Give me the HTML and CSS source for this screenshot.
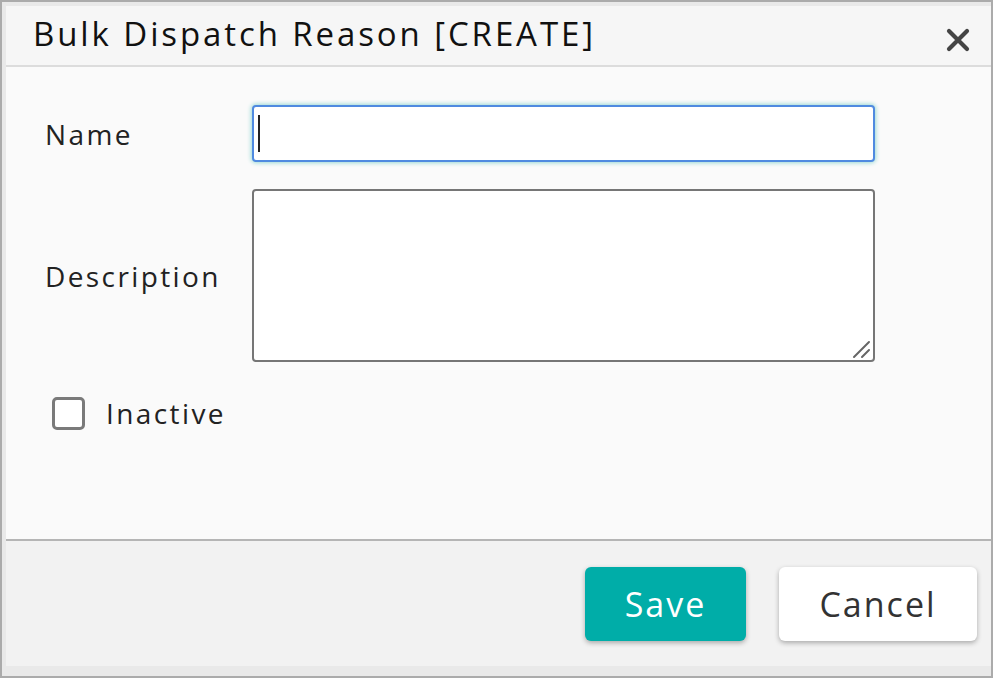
FILE: index.html
```html
<!DOCTYPE html>
<html lang="en">
<head>
    <meta charset="UTF-8">
    <meta name="viewport" content="width=device-width, initial-scale=1.0">
    <title>Bulk Dispatch Reason [CREATE]</title>
    <link rel="stylesheet" href="styles.css">
</head>
<body>
    <div class="frame">
        <div class="dialog">
            <div class="dialog-header">
                <h2>Bulk Dispatch Reason [CREATE]</h2>
                <button class="close-btn" type="button" aria-label="Close">
                    <svg width="24" height="24" viewBox="0 0 24 24">
                        <path d="M3 3 L21 21 M21 3 L3 21" stroke="#444" stroke-width="4.2" stroke-linecap="round"/>
                    </svg>
                </button>
            </div>

            <form class="dialog-body" id="reasonForm">
                <div class="form-row">
                    <label for="name">Name</label>
                    <div class="field">
                        <input type="text" id="name" name="name" class="focused">
                        <span class="caret"></span>
                    </div>
                </div>
                <div class="form-row">
                    <label for="description">Description</label>
                    <div class="field">
                        <textarea id="description" name="description"></textarea>
                        <!-- resize grip -->
                        <svg class="grip" width="22" height="22" viewBox="0 0 22 22">
                            <path d="M4 20 L19 5 M12 20 L19 13" stroke="#666" stroke-width="2" stroke-linecap="round"/>
                        </svg>
                    </div>
                </div>
                <div class="check-row">
                    <input type="checkbox" id="inactive" name="inactive">
                    <label for="inactive">Inactive</label>
                </div>
            </form>

            <div class="dialog-footer">
                <button type="submit" form="reasonForm" class="btn btn-save">Save</button>
                <button type="button" class="btn btn-cancel">Cancel</button>
            </div>
        </div>
    </div>
</body>
</html>
```

FILE: styles.css
```css
/* General Styles */
* {
    box-sizing: border-box;
}
body {
    margin: 0;
    font-family: "Open Sans", "Noto Sans", sans-serif;
    color: #222;
}
.frame {
    width: 993px;
    height: 678px;
    border: 2px solid #ababab;
    background-color: #e9e9e9;
    padding: 4px 0 10px 4px;
}
.dialog {
    height: 100%;
    display: flex;
    flex-direction: column;
    background-color: #fafafa;
}

/* Header */
.dialog-header {
    height: 61px;
    display: flex;
    align-items: center;
    justify-content: space-between;
    padding: 0 21px 4px 27px;
    background-color: #f6f6f6;
    border-bottom: 2px solid #dcdcdc;
}
.dialog-header h2 {
    margin: 0;
    font-size: 33px;
    font-weight: 400;
    color: #111;
    letter-spacing: 2.9px;
}
.close-btn {
    background: none;
    border: none;
    padding: 0;
    margin-top: 12px;
    display: flex;
    cursor: pointer;
}

/* Body */
.dialog-body {
    flex: 1;
    padding: 38px 116px 0 39px;
}
.form-row {
    display: flex;
    align-items: center;
    margin-bottom: 27px;
}
.form-row label {
    width: 207px;
    font-size: 28px;
    letter-spacing: 2.4px;
}
.field {
    position: relative;
    flex: 1;
    display: flex;
}
input[type="text"] {
    display: block;
    width: 100%;
    height: 57px;
    border: 2px solid #4f8ae0;
    border-radius: 4px;
    background: #fff;
    box-shadow: 0 0 4px 1px #9ad9d5;
    font-size: 24px;
    padding: 0 8px;
    caret-color: transparent;
    outline: none;
}
.caret {
    position: absolute;
    left: 6px;
    top: 10px;
    width: 2px;
    height: 37px;
    background-color: #222;
}
textarea {
    flex: 1;
    height: 173px;
    border: 2px solid #767676;
    border-radius: 4px;
    background: #fff;
    resize: none;
    font-size: 24px;
    outline: none;
}
.grip {
    position: absolute;
    right: 3px;
    bottom: 3px;
}
.check-row {
    display: flex;
    align-items: center;
    margin-top: 32px;
    padding-left: 7px;
}
.check-row input {
    appearance: none;
    width: 33px;
    height: 33px;
    margin: 0 21px 0 0;
    border: 3px solid #7a7a7a;
    border-radius: 5px;
    background: #fff;
    filter: blur(0.4px);
}
.check-row label {
    font-size: 28px;
    letter-spacing: 2.4px;
}

/* Footer */
.dialog-footer {
    height: 127px;
    display: flex;
    justify-content: flex-end;
    align-items: flex-start;
    gap: 33px;
    padding: 26px 14px 0 0;
    background-color: #f2f2f2;
    border-top: 2px solid #b5b5b5;
}
.btn {
    height: 74px;
    border: none;
    border-radius: 6px;
    font-family: inherit;
    font-size: 34px;
    letter-spacing: 2px;
    cursor: pointer;
    box-shadow: 0 2px 5px rgba(0, 0, 0, 0.3);
}
.btn-save {
    width: 161px;
    background-color: #00ada8;
    color: #fff;
}
.btn-cancel {
    width: 198px;
    background-color: #fff;
    color: #333;
}
```
